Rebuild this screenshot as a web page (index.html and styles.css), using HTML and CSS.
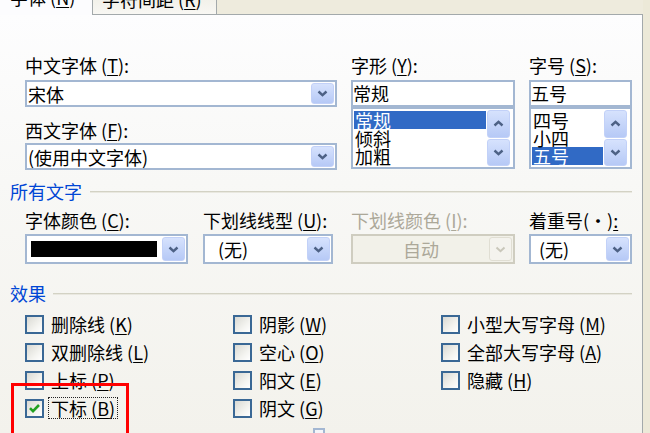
FILE: index.html
```html
<!DOCTYPE html>
<html lang="zh-CN">
<head>
<meta charset="utf-8">
<title>字体</title>
<link rel="stylesheet" href="styles.css">
</head>
<body>
<div class="dialog">
  <div class="tabs">
    <div class="tab tab-active"><span class="tab-label">字体 (<u>N</u>)</span></div>
    <div class="tab tab-inactive"><span class="tab-label">字符间距 (<u>R</u>)</span></div>
    <div class="tab-fill"></div>
  </div>
  <div class="panel">
    <div class="row row-fonts">
      <div class="col col-main">
        <div class="label">中文字体 (<u>T</u>):</div>
        <div class="combo combo-27"><span class="combo-text">宋体</span><span class="dd-btn"><svg width="11" height="7" viewBox="0 0 11 7"><path d="M1.5 1.5 L5.5 5.2 L9.5 1.5" fill="none" stroke="#4D6185" stroke-width="2.4"/></svg></span></div>
        <div class="label label-2">西文字体 (<u>F</u>):</div>
        <div class="combo combo-27 combo-2"><span class="combo-text">(使用中文字体)</span><span class="dd-btn"><svg width="11" height="7" viewBox="0 0 11 7"><path d="M1.5 1.5 L5.5 5.2 L9.5 1.5" fill="none" stroke="#4D6185" stroke-width="2.4"/></svg></span></div>
      </div>
      <div class="col col-style">
        <div class="label">字形 (<u>Y</u>):</div>
        <div class="textbox">常规</div>
        <div class="listbox">
          <div class="items">
            <div class="item sel">常规</div>
            <div class="item">倾斜</div>
            <div class="item">加粗</div>
          </div>
          <div class="vscroll">
            <span class="sb-btn"><svg width="11" height="7" viewBox="0 0 11 7"><path d="M1.5 5.5 L5.5 1.8 L9.5 5.5" fill="none" stroke="#4D6185" stroke-width="2.4"/></svg></span>
            <span class="sb-btn"><svg width="11" height="7" viewBox="0 0 11 7"><path d="M1.5 1.5 L5.5 5.2 L9.5 1.5" fill="none" stroke="#4D6185" stroke-width="2.4"/></svg></span>
          </div>
        </div>
      </div>
      <div class="col col-size">
        <div class="label">字号 (<u>S</u>):</div>
        <div class="textbox">五号</div>
        <div class="listbox">
          <div class="items">
            <div class="item">四号</div>
            <div class="item">小四</div>
            <div class="item sel">五号</div>
          </div>
          <div class="vscroll">
            <span class="sb-btn"><svg width="11" height="7" viewBox="0 0 11 7"><path d="M1.5 5.5 L5.5 1.8 L9.5 5.5" fill="none" stroke="#4D6185" stroke-width="2.4"/></svg></span>
            <span class="sb-btn"><svg width="11" height="7" viewBox="0 0 11 7"><path d="M1.5 1.5 L5.5 5.2 L9.5 1.5" fill="none" stroke="#4D6185" stroke-width="2.4"/></svg></span>
          </div>
        </div>
      </div>
    </div>

    <div class="group-head group-all"><span class="group-title">所有文字</span><i class="rule"></i></div>

    <div class="row row-all">
      <div class="field f-color">
        <div class="label">字体颜色 (<u>C</u>):</div>
        <div class="combo combo-30"><span class="swatch"></span><span class="dd-btn"><svg width="11" height="7" viewBox="0 0 11 7"><path d="M1.5 1.5 L5.5 5.2 L9.5 1.5" fill="none" stroke="#4D6185" stroke-width="2.4"/></svg></span></div>
      </div>
      <div class="field f-uline">
        <div class="label">下划线线型 (<u>U</u>):</div>
        <div class="combo combo-30"><span class="combo-text pad-13">(无)</span><span class="dd-btn"><svg width="11" height="7" viewBox="0 0 11 7"><path d="M1.5 1.5 L5.5 5.2 L9.5 1.5" fill="none" stroke="#4D6185" stroke-width="2.4"/></svg></span></div>
      </div>
      <div class="field f-ucolor">
        <div class="label disabled">下划线颜色 (<u>I</u>):</div>
        <div class="combo combo-30 combo-disabled"><span class="combo-text centered">自动</span><span class="dd-btn dd-disabled"><svg width="11" height="7" viewBox="0 0 11 7"><path d="M1.5 1.5 L5.5 5.2 L9.5 1.5" fill="none" stroke="#C9C7BA" stroke-width="2"/></svg></span></div>
      </div>
      <div class="field f-emph">
        <div class="label label-emph">着重号(•)<u>:</u></div>
        <div class="combo combo-30"><span class="combo-text pad-8">(无)</span><span class="dd-btn"><svg width="11" height="7" viewBox="0 0 11 7"><path d="M1.5 1.5 L5.5 5.2 L9.5 1.5" fill="none" stroke="#4D6185" stroke-width="2.4"/></svg></span></div>
      </div>
    </div>

    <div class="group-head group-fx"><span class="group-title">效果</span><i class="rule"></i></div>

    <div class="effects">
      <div class="fx-col">
        <div class="check-row"><span class="cb"></span><span class="cb-label">删除线 (<u>K</u>)</span></div>
        <div class="check-row"><span class="cb"></span><span class="cb-label">双删除线 (<u>L</u>)</span></div>
        <div class="check-row"><span class="cb"></span><span class="cb-label">上标 (<u>P</u>)</span></div>
        <div class="check-row"><span class="cb cb-checked"><svg width="15" height="15" viewBox="0 0 15 15"><path d="M3 7.2 L6 10.2 L12 4" fill="none" stroke="#21A121" stroke-width="2.6"/></svg></span><span class="cb-label focus">下标 (<u>B</u>)</span></div>
      </div>
      <div class="fx-col">
        <div class="check-row"><span class="cb"></span><span class="cb-label">阴影 (<u>W</u>)</span></div>
        <div class="check-row"><span class="cb"></span><span class="cb-label">空心 (<u>O</u>)</span></div>
        <div class="check-row"><span class="cb"></span><span class="cb-label">阳文 (<u>E</u>)</span></div>
        <div class="check-row"><span class="cb"></span><span class="cb-label">阴文 (<u>G</u>)</span></div>
      </div>
      <div class="fx-col fx-last">
        <div class="check-row"><span class="cb"></span><span class="cb-label">小型大写字母 (<u>M</u>)</span></div>
        <div class="check-row"><span class="cb"></span><span class="cb-label">全部大写字母 (<u>A</u>)</span></div>
        <div class="check-row"><span class="cb"></span><span class="cb-label">隐藏 (<u>H</u>)</span></div>
      </div>
    </div>
    <div class="stub"></div>
  </div>
</div>
<div class="annot"></div>
</body>
</html>
```

FILE: styles.css
```css
html, body {
  margin: 0;
  padding: 0;
}
body {
  width: 650px;
  height: 433px;
  overflow: hidden;
  background: #ECE9D8;
  font-family: "Noto Sans CJK SC", "Noto Sans", sans-serif;
  font-size: 18px;
  color: #000;
  position: relative;
}
u {
  text-decoration: underline;
  text-underline-offset: 2px;
}
.dialog {
  width: 643px;
  height: 433px;
  overflow: hidden;
}
.tabs {
  display: flex;
  height: 15px;
  overflow: hidden;
}
.tab {
  box-sizing: border-box;
  height: 15px;
  line-height: 18px;
  overflow: hidden;
}
.tab-active {
  width: 92px;
  background: #FCFCFE;
  padding-left: 10px;
}
.tab-active .tab-label {
  display: block;
  margin-top: -12px;
}
.tab-inactive {
  width: 125px;
  background: linear-gradient(#F2F1EA, #F8F7F3);
  border-left: 1px solid #A3A9AB;
  border-right: 1px solid #A3A9AB;
  border-bottom: 1px solid #A3A9AB;
  padding-left: 9px;
}
.tab-inactive .tab-label {
  display: block;
  margin-top: -10px;
}
.tab-fill {
  flex: 1;
  height: 15px;
  box-sizing: border-box;
  background: #EEEBDD;
  border-bottom: 1px solid #A3A9AB;
}
.panel {
  box-sizing: border-box;
  width: 643px;
  height: 418px;
  border-right: 1px solid #A3A9AB;
  background: linear-gradient(#FDFDFE 0%, #F8F8F6 40%, #F3F2EC 100%);
  padding: 39px 10px 0 25px;
  position: relative;
}
.row {
  display: flex;
  align-items: flex-start;
}
.col, .field { flex: none; }
.col-main { width: 312px; }
.col-style { width: 164px; margin-left: 14px; }
.col-size { width: 103px; margin-left: 14px; }
.label {
  height: 22px;
  line-height: 22px;
  white-space: nowrap;
}
.label-2 { margin-top: 12px; }
.disabled { color: #ACA899; }
.combo {
  box-sizing: border-box;
  display: flex;
  align-items: stretch;
  border: 2px solid #A3B7D2;
  background: #fff;
  margin-top: 4px;
}
.combo-2 { margin-top: 2px; }
.combo-27 { height: 27px; }
.combo-30 { height: 30px; margin-top: 3px; }
.combo-text {
  flex: 1;
  padding-left: 1px;
  display: flex;
  align-items: center;
  line-height: 20px;
  white-space: nowrap;
}
.pad-13 { padding-left: 13px; }
.pad-8 { padding-left: 8px; }
.centered { justify-content: center; padding-left: 0; }
.dd-btn {
  box-sizing: border-box;
  width: 23px;
  margin: 1px 1px 1px 0;
  border: 1px solid #C2D1F8;
  border-radius: 3px;
  background: linear-gradient(#D6E2FD, #B6C9F6);
  display: flex;
  align-items: center;
  justify-content: center;
}
.combo-disabled {
  background: #F2F1E9;
  border-color: #CFCDC0;
  color: #ACA899;
}
.dd-disabled {
  background: #F4F3EE;
  border-color: #E0DED3;
}
.swatch {
  width: 126px;
  height: 16px;
  margin: 0 5px 0 4px;
  align-self: center;
  background: #000;
}
.textbox {
  box-sizing: border-box;
  height: 27px;
  margin-top: 4px;
  border: 2px solid #A3B7D2;
  background: #fff;
  padding-left: 0;
  line-height: 23px;
}
.listbox {
  box-sizing: border-box;
  height: 62px;
  border: 2px solid #A3B7D2;
  background: #fff;
  display: flex;
  overflow: hidden;
}
.items {
  flex: 1;
  padding: 2px 0 0 1px;
}
.item {
  height: 18px;
  line-height: 18px;
  padding-left: 1px;
  white-space: nowrap;
}
.item.sel {
  background: #316AC5;
  color: #fff;
}
.vscroll {
  width: 23px;
  margin: 1px 3px 1px 1px;
  display: flex;
  flex-direction: column;
  gap: 1px;
}
.sb-btn {
  box-sizing: border-box;
  flex: 1;
  border: 1px solid #C2D1F8;
  border-radius: 3px;
  background: linear-gradient(#D6E2FD, #B6C9F6);
  display: flex;
  align-items: center;
  justify-content: center;
}
.group-head {
  display: flex;
  align-items: center;
  height: 22px;
  margin-left: -15px;
}
.group-all { margin-top: 10px; }
.group-fx { margin-top: 18px; }
.group-title {
  color: #0046D5;
  line-height: 22px;
  white-space: nowrap;
}
.rule {
  flex: 1;
  height: 1px;
  background: #D3D2C4;
  box-shadow: 0 1px 0 #E9E8E0;
  margin-left: 8px;
}
.group-fx .rule { margin-left: 7px; }
.row-all { margin-top: 7px; }
.f-color { width: 163px; }
.f-uline { width: 130px; margin-left: 15px; }
.f-ucolor { width: 164px; margin-left: 18px; }
.f-emph { width: 103px; margin-left: 14px; }
.effects {
  display: flex;
  margin-top: 6px;
}
.fx-col {
  flex: none;
  width: 208px;
  display: flex;
  flex-direction: column;
}
.fx-last { width: 190px; }
.check-row {
  height: 28px;
  display: flex;
  align-items: center;
}
.cb {
  box-sizing: border-box;
  width: 19px;
  height: 19px;
  border: 2px solid #3A6895;
  background: linear-gradient(135deg, #D9D9D3 0%, #F3F3EF 60%, #FFFFFF 100%);
  display: flex;
  align-items: center;
  justify-content: center;
  flex: none;
}
.cb-label {
  margin-left: 4px;
  padding: 0 2px;
  border: 1px dotted transparent;
  line-height: 20px;
  white-space: nowrap;
}
.cb-label.focus {
  border-color: #222;
}
.stub {
  box-sizing: border-box;
  width: 12px;
  height: 10px;
  margin: 6px 0 0 288px;
  border: 2px solid #A3B7D2;
  border-bottom: none;
  background: #F4F6FA;
}
.annot {
  position: absolute;
  left: 11px;
  top: 383px;
  width: 118px;
  height: 60px;
  box-sizing: border-box;
  border: 3px solid #FF0000;
}
```
